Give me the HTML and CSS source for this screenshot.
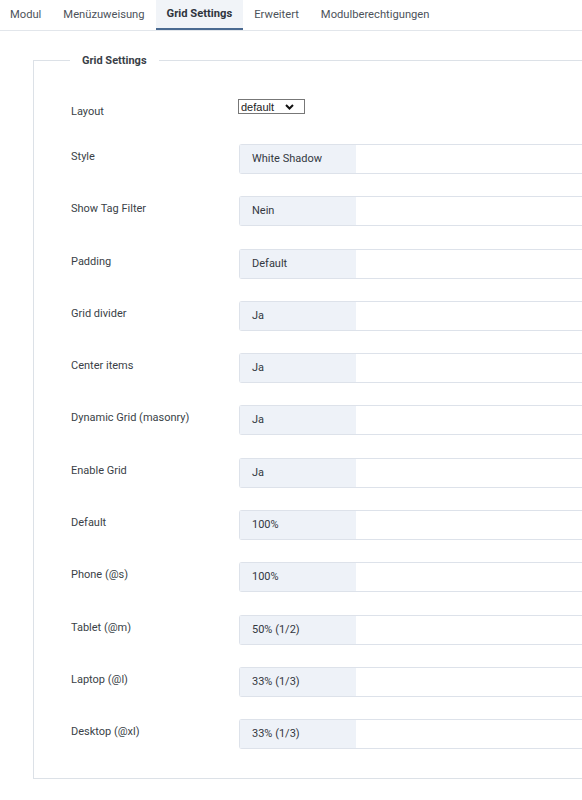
FILE: index.html
```html
<!DOCTYPE html>
<html lang="de">
<head>
    <meta charset="UTF-8">
    <meta name="viewport" content="width=device-width, initial-scale=1.0">
    <title>Modul - Grid Settings</title>
    <link rel="stylesheet" href="styles.css">
</head>
<body>
    <ul class="tabs">
        <li class="tab">Modul</li>
        <li class="tab">Menüzuweisung</li>
        <li class="tab active">Grid Settings</li>
        <li class="tab">Erweitert</li>
        <li class="tab">Modulberechtigungen</li>
    </ul>

    <fieldset class="options">
        <legend>Grid Settings</legend>

        <div class="row row-layout">
            <label>Layout</label>
            <div class="select">
                <span>default</span>
                <svg width="9" height="6" viewBox="0 0 9 6"><path d="M1 1 L4.5 4.5 L8 1" fill="none" stroke="#111" stroke-width="2"/></svg>
            </div>
        </div>

        <div class="row"><label>Style</label><div class="field"><span class="value">White Shadow</span></div></div>
        <div class="row"><label>Show Tag Filter</label><div class="field"><span class="value">Nein</span></div></div>
        <div class="row"><label>Padding</label><div class="field"><span class="value">Default</span></div></div>
        <div class="row"><label>Grid divider</label><div class="field"><span class="value">Ja</span></div></div>
        <div class="row"><label>Center items</label><div class="field"><span class="value">Ja</span></div></div>
        <div class="row"><label>Dynamic Grid (masonry)</label><div class="field"><span class="value">Ja</span></div></div>
        <div class="row"><label>Enable Grid</label><div class="field"><span class="value">Ja</span></div></div>
        <div class="row"><label>Default</label><div class="field"><span class="value">100%</span></div></div>
        <div class="row"><label>Phone (@s)</label><div class="field"><span class="value">100%</span></div></div>
        <div class="row"><label>Tablet (@m)</label><div class="field"><span class="value">50% (1/2)</span></div></div>
        <div class="row"><label>Laptop (@l)</label><div class="field"><span class="value">33% (1/3)</span></div></div>
        <div class="row"><label>Desktop (@xl)</label><div class="field"><span class="value">33% (1/3)</span></div></div>
    </fieldset>
</body>
</html>
```

FILE: styles.css
```css
body {
    font-family: Roboto, "Liberation Sans", sans-serif;
    font-size: 11px;
    color: #3a3f47;
    background: #fff;
    margin: 0;
    overflow: hidden;
}
.tabs {
    list-style: none;
    margin: 0;
    padding: 0;
    display: flex;
    height: 30px;
    border-bottom: 1px solid #e2e6eb;
}
.tab {
    padding: 0 11px;
    line-height: 29px;
    font-size: 11.2px;
    color: #4d535b;
}
.tab:first-child {
    padding-left: 10px;
}
.tab.active {
    font-weight: bold;
    color: #2f353d;
    background: #f1f4f8;
    border-bottom: 2px solid #4a6a91;
    line-height: 28px;
}
.options {
    margin: 23px 0 0 33px;
    padding: 32px 0 6px 37px;
    border: 1px solid #dce1e7;
    border-right: none;
    min-inline-size: 0;
}
.options legend {
    margin-left: -1px;
    padding: 0 12px;
    font-weight: bold;
    font-size: 11px;
    color: #3a3f47;
}
.row {
    display: flex;
    align-items: flex-start;
    margin-bottom: 22.3px;
}
.row-layout {
    margin-bottom: 20px;
}
.row label {
    width: 168px;
    line-height: 25px;
    flex-shrink: 0;
}
.select {
    height: 13px;
    border: 1px solid #777;
    display: flex;
    align-items: center;
    justify-content: space-between;
    padding: 0 10px 0 2px;
    box-sizing: content-box;
    width: 53px;
    font-family: "Liberation Sans", Arial, sans-serif;
    font-size: 11px;
    color: #222;
    margin-left: -1px;
}
.field {
    flex: 1;
    height: 28px;
    border: 1px solid #dde2ea;
    border-right: none;
    border-radius: 3px 0 0 3px;
    display: flex;
}
.value {
    width: 104px;
    padding-left: 12px;
    line-height: 28px;
    background: #eef2f8;
    color: #33383f;
}
```
